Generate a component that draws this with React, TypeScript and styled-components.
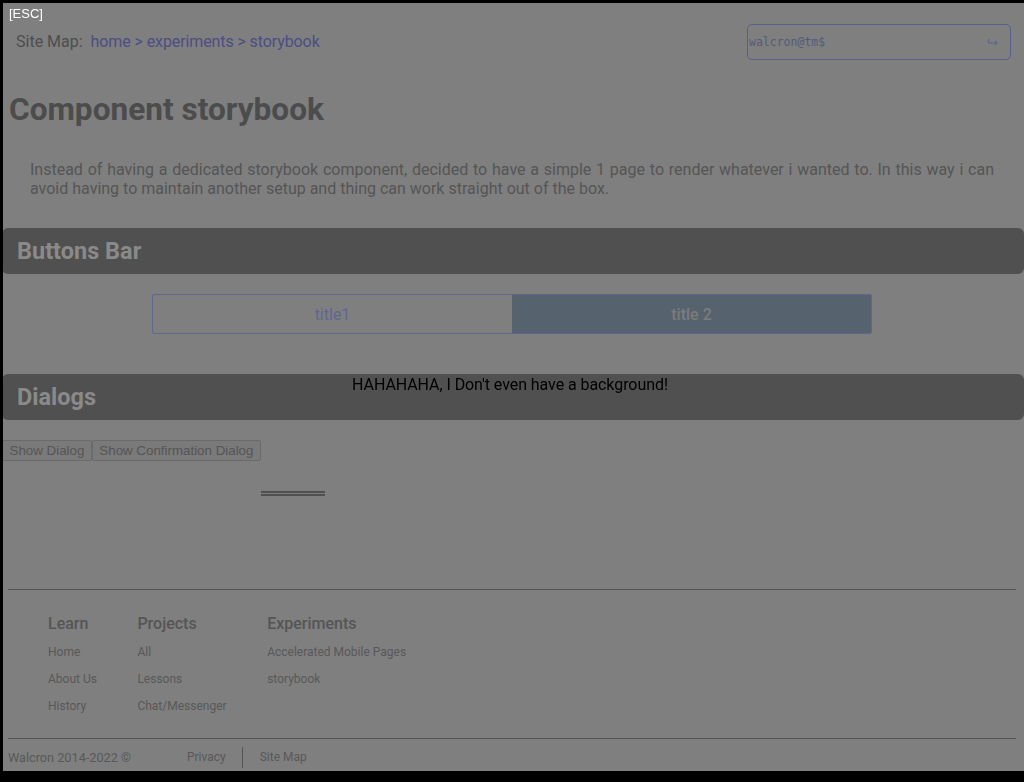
import React from 'react';
import styled, { createGlobalStyle } from 'styled-components';

const GlobalStyle = createGlobalStyle`
  html, body {
    background: #7f7f7f;
  }
  body {
    margin: 0;
    padding: 8px;
    overflow: hidden;
    font-family: Roboto, 'Liberation Sans', sans-serif;
  }
`;

const learn = ['Home', 'About Us', 'History'];
const projects = ['All', 'Lessons', 'Chat/Messenger'];
const experiments = ['Accelerated Mobile Pages', 'storybook'];

const EnterIcon: React.FC = () => (
  <svg width="11" height="8" viewBox="0 0 11 8" fill="none" stroke="#5b6590" strokeWidth="1.2">
    <path d="M3 1.5 C0.8 1.5 0.8 5 3 5 H10" />
    <path d="M8 3 L10 5 L8 7" />
  </svg>
);

const App: React.FC = () => {
  return (
    <>
      <GlobalStyle />
      <Page>
        <TopBar>
          <Breadcrumb>
            <CrumbLabel>Site Map:</CrumbLabel>
            <CrumbLinks>home &gt; experiments &gt; storybook</CrumbLinks>
          </Breadcrumb>
          <Terminal>
            <Prompt>walcron@tm$</Prompt>
            <EnterIcon />
          </Terminal>
        </TopBar>

        <Title>Component storybook</Title>
        <Intro>
          Instead of having a dedicated storybook component, decided to have a
          simple 1 page to render whatever i wanted to. In this way i can avoid
          having to maintain another setup and thing can work straight out of
          the box.
        </Intro>

        <SectionBar>Buttons Bar</SectionBar>
        <ButtonGroup>
          <GroupButton>title1</GroupButton>
          <GroupButton $active>title 2</GroupButton>
        </ButtonGroup>

        <SectionBar $top={40}>Dialogs</SectionBar>
        <DialogButtons>
          <PlainButton>Show Dialog</PlainButton>
          <PlainButton>Show Confirmation Dialog</PlainButton>
        </DialogButtons>
        <EmptyDialog />

        <Footer>
          <Rule />
          <Columns>
            <Column>
              <ColumnTitle>Learn</ColumnTitle>
              {learn.map((l) => (
                <FooterLink key={l}>{l}</FooterLink>
              ))}
            </Column>
            <Column>
              <ColumnTitle>Projects</ColumnTitle>
              {projects.map((l) => (
                <FooterLink key={l}>{l}</FooterLink>
              ))}
            </Column>
            <Column>
              <ColumnTitle>Experiments</ColumnTitle>
              {experiments.map((l) => (
                <FooterLink key={l}>{l}</FooterLink>
              ))}
            </Column>
          </Columns>
          <Rule />
          <BottomRow>
            <Copyright>Walcron 2014-2022 ©</Copyright>
            <BottomLink>Privacy</BottomLink>
            <BottomLink $divider>Site Map</BottomLink>
          </BottomRow>
        </Footer>
      </Page>

      <Frame>
        <EscHint>[ESC]</EscHint>
      </Frame>
      <FloatingDialog>HAHAHAHA, I Don't even have a background!</FloatingDialog>
    </>
  );
};

const Page = styled.div`
  display: flex;
  flex-direction: column;
`;

const TopBar = styled.div`
  display: flex;
  justify-content: space-between;
  align-items: center;
  margin-top: 16px;
  padding: 0 5px 0 8px;
`;

const Breadcrumb = styled.div`
  display: flex;
  gap: 8px;
  font-size: 16px;
  padding-bottom: 2px;
`;

const CrumbLabel = styled.span`
  color: #4d4d4d;
`;

const CrumbLinks = styled.span`
  color: #4d4d84;
  letter-spacing: -0.1px;
`;

const Terminal = styled.div`
  width: 249px;
  height: 34px;
  border: 1px solid #56608a;
  border-radius: 5px;
  display: flex;
  align-items: center;
  justify-content: space-between;
  padding: 0 12px 0 1px;
`;

const Prompt = styled.span`
  font-family: 'DejaVu Sans Mono', monospace;
  font-size: 11.5px;
  color: #535b7a;
`;

const Title = styled.h1`
  margin: 31px 0 0 1px;
  font-size: 31.6px;
  line-height: 38px;
  font-weight: 700;
  color: #4c4c4c;
`;

const Intro = styled.p`
  margin: 31px 0 0;
  padding: 0 22px;
  font-size: 16px;
  line-height: 19px;
  text-align: justify;
  color: #555555;
`;

const SectionBar = styled.h2<{ $top?: number }>`
  margin: ${(p) => p.$top ?? 30}px -8px 0 -6px;
  height: 46px;
  padding-left: 15px;
  display: flex;
  align-items: center;
  background: #505050;
  border-radius: 6px;
  font-size: 23.5px;
  font-weight: 700;
  color: #8a8a8a;
`;

const ButtonGroup = styled.div`
  display: grid;
  grid-template-columns: 1fr 1fr;
  width: 720px;
  margin: 20px auto 0;
  border: 1px solid #5e6790;
  border-radius: 2px;
  box-sizing: border-box;
`;

const GroupButton = styled.div<{ $active?: boolean }>`
  height: 38px;
  display: flex;
  align-items: center;
  justify-content: center;
  font-size: 16px;
  font-weight: ${(p) => (p.$active ? 500 : 400)};
  color: ${(p) => (p.$active ? '#7c7c7c' : '#5f6690')};
  background: ${(p) => (p.$active ? '#56636f' : 'transparent')};
`;

const DialogButtons = styled.div`
  display: flex;
  gap: 0;
  margin: 20px 0 0 -6px;
`;

const PlainButton = styled.button`
  height: 21px;
  padding: 0 6.5px;
  font-family: 'Liberation Sans', Arial, sans-serif;
  font-size: 13.33px;
  color: #555555;
  background: #7a7a7a;
  border: 1px solid #6a6a6a;
  border-radius: 2px;
`;

const EmptyDialog = styled.div`
  width: 64px;
  margin: 30px 0 0 253px;
  border-top: 5px double #505050;
`;

const Footer = styled.footer`
  margin-top: 93px;
`;

const Rule = styled.div`
  height: 1px;
  background: #555555;
`;

const Columns = styled.div`
  display: flex;
  gap: 40.5px;
  padding: 24px 40px 18px;
`;

const Column = styled.div`
  display: flex;
  flex-direction: column;
`;

const ColumnTitle = styled.div`
  font-size: 16px;
  font-weight: 500;
  line-height: 20px;
  color: #555555;
  margin-bottom: 5px;
`;

const FooterLink = styled.div`
  font-size: 12px;
  line-height: 27px;
  color: #585858;
`;

const BottomRow = styled.div`
  display: flex;
  align-items: center;
  padding-top: 8px;
  height: 21px;
  font-size: 12px;
`;

const Copyright = styled.span`
  font-size: 12.7px;
  color: #585858;
  margin-right: 56px;
`;

const BottomLink = styled.span<{ $divider?: boolean }>`
  color: #585858;
  padding: ${(p) => (p.$divider ? '0 0 0 17px' : '0 16px 0 0')};
  border-left: ${(p) => (p.$divider ? '1px solid #555555' : 'none')};
  line-height: 21px;
`;

const Frame = styled.div`
  position: fixed;
  inset: 0;
  border-left: 3px solid #000;
  border-top: 3px solid #000;
  border-bottom: 11px solid #000;
  pointer-events: none;
`;

const EscHint = styled.span`
  position: absolute;
  top: 3px;
  left: 6px;
  font-family: 'Liberation Sans', Arial, sans-serif;
  font-size: 13px;
  color: #ffffff;
`;

const FloatingDialog = styled.div`
  position: fixed;
  top: 375px;
  left: 0;
  right: 0;
  text-align: center;
  font-size: 16px;
  line-height: 19px;
  letter-spacing: -0.07px;
  color: #000;
  padding-right: 4px;
`;

export default App;
